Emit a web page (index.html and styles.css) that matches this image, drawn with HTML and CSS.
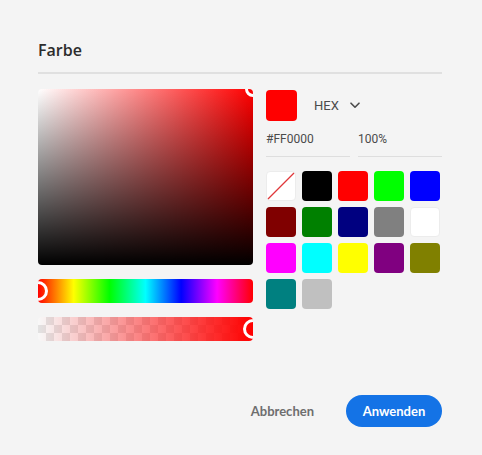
FILE: index.html
```html
<!DOCTYPE html>
<html lang="de">
<head>
<meta charset="utf-8">
<title>Farbe</title>
<link rel="stylesheet" href="styles.css">
</head>
<body>
<div class="dialog">
  <h1 class="title">Farbe</h1>
  <div class="divider"></div>
  <div class="content">
    <div class="picker">
      <div class="sat">
        <span class="handle handle-sat"></span>
      </div>
      <div class="hue">
        <span class="handle handle-bar handle-left"></span>
      </div>
      <div class="alpha">
        <div class="alpha-fill"></div>
        <span class="handle handle-bar handle-right"></span>
      </div>
    </div>
    <div class="side">
      <div class="mode-row">
        <div class="current"></div>
        <span class="mode">HEX</span>
        <svg class="chev" width="10" height="7" viewBox="0 0 10 7"><path d="M1 1.2 L5 5.2 L9 1.2" fill="none" stroke="#4b4b4b" stroke-width="1.6" stroke-linecap="round" stroke-linejoin="round"/></svg>
      </div>
      <div class="fields">
        <div class="field">#FF0000</div>
        <div class="field">100%</div>
      </div>
      <div class="swatches">
        <div class="sw sw-none"><svg width="30" height="30" viewBox="0 0 30 30"><line x1="2" y1="28" x2="28" y2="2" stroke="#e0373a" stroke-width="1.3"/></svg></div>
        <div class="sw" style="background:#000000"></div>
        <div class="sw" style="background:#ff0000"></div>
        <div class="sw" style="background:#00ff00"></div>
        <div class="sw" style="background:#0000ff"></div>
        <div class="sw" style="background:#800000"></div>
        <div class="sw" style="background:#008000"></div>
        <div class="sw" style="background:#000080"></div>
        <div class="sw" style="background:#808080"></div>
        <div class="sw sw-white"></div>
        <div class="sw" style="background:#ff00ff"></div>
        <div class="sw" style="background:#00ffff"></div>
        <div class="sw" style="background:#ffff00"></div>
        <div class="sw" style="background:#800080"></div>
        <div class="sw" style="background:#808000"></div>
        <div class="sw" style="background:#008080"></div>
        <div class="sw" style="background:#c0c0c0"></div>
      </div>
    </div>
  </div>
  <div class="footer">
    <button class="btn btn-cancel">Abbrechen</button>
    <button class="btn btn-apply">Anwenden</button>
  </div>
</div>
</body>
</html>
```
FILE: styles.css
```css
html, body {
  margin: 0;
  padding: 0;
  background: #f4f4f4;
}
.dialog {
  width: 482px;
  height: 455px;
  box-sizing: border-box;
  padding: 40px 40px 0 38px;
  font-family: "Open Sans", sans-serif;
}
.title {
  margin: 0;
  font-size: 16px;
  line-height: 20px;
  font-weight: 600;
  color: #2c2c2c;
}
.divider {
  height: 2px;
  background: #e0e0e0;
  margin-top: 12px;
}
.content {
  display: flex;
  gap: 13px;
  margin-top: 15px;
}
.picker {
  width: 215px;
  display: flex;
  flex-direction: column;
  gap: 14px;
}
.sat {
  position: relative;
  overflow: hidden;
  height: 176px;
  border-radius: 4px;
  background:
    linear-gradient(to top, #000, rgba(0,0,0,0)),
    linear-gradient(to right, #fff, #ff0000);
}
.hue {
  position: relative;
  overflow: hidden;
  height: 24px;
  border-radius: 4px;
  background: linear-gradient(to right, #ff0000 0%, #ffff00 16.6%, #00ff00 33.3%, #00ffff 50%, #0000ff 66.6%, #ff00ff 83.3%, #ff0000 100%);
}
.alpha {
  position: relative;
  overflow: hidden;
  height: 24px;
  border-radius: 4px;
  background-color: #f8f8f8;
  background-image:
    linear-gradient(45deg, #e2e2e2 25%, transparent 25%, transparent 75%, #e2e2e2 75%),
    linear-gradient(45deg, #e2e2e2 25%, transparent 25%, transparent 75%, #e2e2e2 75%);
  background-size: 16px 16px;
  background-position: 0 0, 8px 8px;
}
.alpha-fill {
  height: 100%;
  background: linear-gradient(to right, rgba(255,0,0,0), #ff0000);
}
.handle {
  position: absolute;
  box-sizing: border-box;
  border: 3px solid #fff;
  border-radius: 50%;
  transform: translate(-50%, -50%);
}
.handle-sat {
  width: 16px;
  height: 16px;
  left: 100%;
  top: 0;
}
.handle-bar {
  width: 20px;
  height: 20px;
  top: 50%;
}
.handle-left { left: 0; }
.handle-right { left: 100%; }
.side {
  flex: 1;
  font-family: "Roboto", sans-serif;
  color: #4b4b4b;
}
.mode-row {
  display: flex;
  align-items: center;
  height: 31px;
  margin-top: 1px;
}
.current {
  width: 31px;
  height: 31px;
  border-radius: 4px;
  background: #ff0000;
}
.mode {
  margin-left: 17px;
  font-size: 13px;
}
.chev {
  margin-left: 11px;
}
.fields {
  display: flex;
  gap: 8px;
  margin-top: 8px;
}
.field {
  flex: 1;
  font-size: 12px;
  line-height: 16px;
  padding-top: 2px;
  padding-bottom: 9px;
  border-bottom: 1px solid #dedede;
}
.swatches {
  display: grid;
  grid-template-columns: repeat(5, 30px);
  grid-auto-rows: 30px;
  gap: 6px;
  margin-top: 14px;
}
.sw {
  border-radius: 4px;
  box-sizing: border-box;
}
.sw-none, .sw-white {
  background: #fff;
  border: 1px solid #ececec;
}
.sw-none svg {
  display: block;
  margin: -1px;
}
.footer {
  display: flex;
  justify-content: flex-end;
  align-items: center;
  gap: 32px;
  margin-top: 54px;
}
.btn {
  font-family: "Lato", sans-serif;
  font-weight: 700;
  font-size: 13px;
  border: none;
  cursor: pointer;
  padding: 0;
}
.btn-cancel {
  background: none;
  color: #6e6e6e;
}
.btn-apply {
  height: 32px;
  width: 96px;
  border-radius: 16px;
  background: #1473e6;
  color: #fff;
}
```
